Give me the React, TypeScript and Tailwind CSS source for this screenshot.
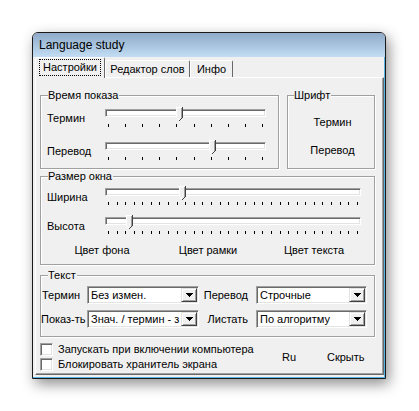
import React from "react";

function Thumb() {
  return (
    <svg width="7" height="14" viewBox="0 0 7 14" className="block" shapeRendering="crispEdges">
      <polygon points="0,0 7,0 7,11 3.5,14 0,11" fill="#f0f0f0" />
      <rect x="0" y="0" width="6" height="1" fill="#ffffff" />
      <rect x="0" y="0" width="1" height="11" fill="#ffffff" />
      <rect x="6" y="0" width="1" height="11" fill="#404040" />
      <rect x="5" y="1" width="1" height="10" fill="#a0a0a0" />
      <rect x="1" y="11" width="1" height="1" fill="#ffffff" />
      <rect x="2" y="12" width="1" height="1" fill="#ffffff" />
      <rect x="5" y="11" width="1" height="1" fill="#404040" />
      <rect x="4" y="12" width="1" height="1" fill="#404040" />
      <rect x="3" y="13" width="1" height="1" fill="#404040" />
    </svg>
  );
}

function Slider({
  className,
  ticks,
  thumb,
  tickClass,
}: {
  className: string;
  ticks: number;
  thumb: number;
  tickClass: string;
}) {
  return (
    <div className={`relative ${className}`}>
      <div className="h-[2px]" />
      <div className="h-[8px] bg-white border border-t-[#a0a0a0] border-l-[#a0a0a0] border-r-white border-b-white shadow-[inset_1px_1px_0_#696969,inset_-1px_-1px_0_#e3e3e3]" />
      <div className={`flex justify-between pl-[3px] pr-[3px] ${tickClass}`}>
        {Array.from({ length: ticks }).map((_, i) => (
          <div key={i} className="w-px h-[3px] bg-black" />
        ))}
      </div>
      <div className="absolute top-0" style={{ left: thumb }}>
        <Thumb />
      </div>
    </div>
  );
}

function Arrow() {
  return (
    <svg width="7" height="4" viewBox="0 0 7 4" shapeRendering="crispEdges" className="block">
      <rect x="0" y="0" width="7" height="1" fill="#000" />
      <rect x="1" y="1" width="5" height="1" fill="#000" />
      <rect x="2" y="2" width="3" height="1" fill="#000" />
      <rect x="3" y="3" width="1" height="1" fill="#000" />
    </svg>
  );
}

function Combo({ text, className }: { text: string; className: string }) {
  return (
    <div
      className={`${className} h-[18px] flex bg-white border border-t-[#a0a0a0] border-l-[#a0a0a0] border-r-white border-b-white shadow-[inset_1px_1px_0_#696969,inset_-1px_-1px_0_#e3e3e3] p-[1px]`}
    >
      <div className="flex-1 min-w-0 overflow-hidden whitespace-nowrap pl-[2px] leading-[14px]">{text}</div>
      <div className="w-[16px] h-full shrink-0 bg-[#f0f0f0] border border-t-[#e3e3e3] border-l-[#e3e3e3] border-r-[#404040] border-b-[#404040] shadow-[inset_1px_1px_0_#fff,inset_-1px_-1px_0_#a0a0a0] flex items-center justify-center">
        <Arrow />
      </div>
    </div>
  );
}

function Check({ label }: { label: string }) {
  return (
    <div className="h-[15px] flex items-center">
      <div className="w-[13px] h-[13px] bg-white border border-t-[#a0a0a0] border-l-[#a0a0a0] border-r-white border-b-white shadow-[inset_1px_1px_0_#696969,inset_-1px_-1px_0_#e3e3e3]" />
      <span className="ml-[5px]">{label}</span>
    </div>
  );
}

const groupCls =
  "border border-[#a0a0a0] shadow-[1px_1px_0_#fff,inset_1px_1px_0_#fff] m-0 p-0 min-w-0";
const legendCls = "ml-[7px] pr-[1px] leading-[13px] bg-[#f0f0f0]";

export default function App() {
  return (
    <div className="w-[419px] h-[411px] bg-white pt-[32px] pl-[32px] font-['Liberation_Sans',Arial,sans-serif] text-[11px] leading-[13px] text-black">
      <div className="w-[354px] h-[347px] flex flex-col border border-[#1a1a1a] rounded-t-[6px] shadow-[3px_5px_14px_rgba(0,0,0,0.45)] bg-[#f0f0f0] overflow-hidden">
        <div className="h-[24px] shrink-0 flex items-center pl-[6px] bg-gradient-to-b from-[#8eaac8] to-[#c2ddf3] text-[12px]">
          Language study
        </div>
        <div className="flex-1 flex flex-col pl-[2px] border-r border-b border-[#56b3e3]">
          {/* tabs */}
          <div className="h-[20px] flex items-end shrink-0">
            <div className="relative z-10 w-[70px] h-[21px] -mb-px bg-[#f0f0f0] border-t border-l border-white border-r border-r-[#696969] rounded-t-[2px] flex justify-center pt-[1px]">
              <span className="h-[17px] px-[3px] border border-dotted border-black leading-[15px]">Настройки</span>
            </div>
            <div className="w-[85px] h-[17px] border-t border-l border-white border-r border-r-[#696969] rounded-t-[2px] flex justify-center items-center">
              Редактор слов
            </div>
            <div className="w-[43px] h-[17px] border-t border-l border-white border-r border-r-[#696969] rounded-t-[2px] flex justify-center items-center">
              Инфо
            </div>
          </div>
          {/* panel */}
          <div className="w-[349px] h-[298px] border border-t-white border-l-white border-r-[#696969] border-b-[#696969] shadow-[inset_-1px_-1px_0_#a0a0a0] pt-[11px] pl-[4px]">
            <div className="flex">
              <fieldset className={`${groupCls} w-[239px] h-[80px]`}>
                <legend className={legendCls}>Время показа</legend>
                <div className="pt-[5px] pl-[6px] flex items-start">
                  <div className="w-[58px] mt-[5px]">Термин</div>
                  <Slider className="w-[161px]" ticks={10} thumb={71} tickClass="mt-[7px]" />
                </div>
                <div className="mt-[13px] pl-[6px] flex items-start">
                  <div className="w-[58px] mt-[5px]">Перевод</div>
                  <Slider className="w-[161px]" ticks={10} thumb={104} tickClass="mt-[7px]" />
                </div>
              </fieldset>
              <fieldset className={`${groupCls} ml-[8px] w-[88px] h-[80px]`}>
                <legend className="ml-[6px] pr-[1px] leading-[13px] bg-[#f0f0f0]">Шрифт</legend>
                <div className="flex flex-col items-center pl-[3px]">
                  <div className="mt-[14px]">Термин</div>
                  <div className="mt-[15px]">Перевод</div>
                </div>
              </fieldset>
            </div>
            <fieldset className={`${groupCls} mt-[1px] w-[335px] h-[95px]`}>
              <legend className={legendCls}>Размер окна</legend>
              <div className="pt-[3px] pl-[6px] flex items-start">
                <div className="w-[58px] mt-[5px]">Ширина</div>
                <Slider className="w-[256px]" ticks={30} thumb={74} tickClass="mt-[6px]" />
              </div>
              <div className="mt-[10px] pl-[6px] flex items-start">
                <div className="w-[58px] mt-[5px]">Высота</div>
                <Slider className="w-[256px]" ticks={30} thumb={21} tickClass="mt-[6px]" />
              </div>
              <div className="mt-[10px] pl-[11px] flex gap-[6px]">
                <div className="w-[100px] text-center">Цвет фона</div>
                <div className="w-[100px] text-center">Цвет рамки</div>
                <div className="w-[100px] text-center">Цвет текста</div>
              </div>
            </fieldset>
            <fieldset className={`${groupCls} mt-[4px] w-[335px] h-[68px]`}>
              <legend className={legendCls}>Текст</legend>
              <div className="pt-[4px] flex items-center">
                <div className="w-[46px] pl-[1px] whitespace-nowrap">Термин</div>
                <Combo className="w-[112px]" text="Без измен." />
                <div className="w-[57px] text-right pr-[8px] whitespace-nowrap">Перевод</div>
                <Combo className="w-[111px]" text="Строчные" />
              </div>
              <div className="mt-[6px] flex items-center">
                <div className="w-[46px] pl-[0px] whitespace-nowrap">Показ-ть</div>
                <Combo className="w-[112px]" text="Знач. / термин - з" />
                <div className="w-[57px] text-right pr-[8px] whitespace-nowrap">Листать</div>
                <Combo className="w-[111px]" text="По алгоритму" />
              </div>
            </fieldset>
            <div className="mt-[5px] flex items-center">
              <div className="w-[242px] flex flex-col">
                <Check label="Запускать при включении компьютера" />
                <Check label="Блокировать хранитель экрана" />
              </div>
              <div className="w-[45px]">Ru</div>
              <div>Скрыть</div>
            </div>
          </div>
        </div>
      </div>
    </div>
  );
}
